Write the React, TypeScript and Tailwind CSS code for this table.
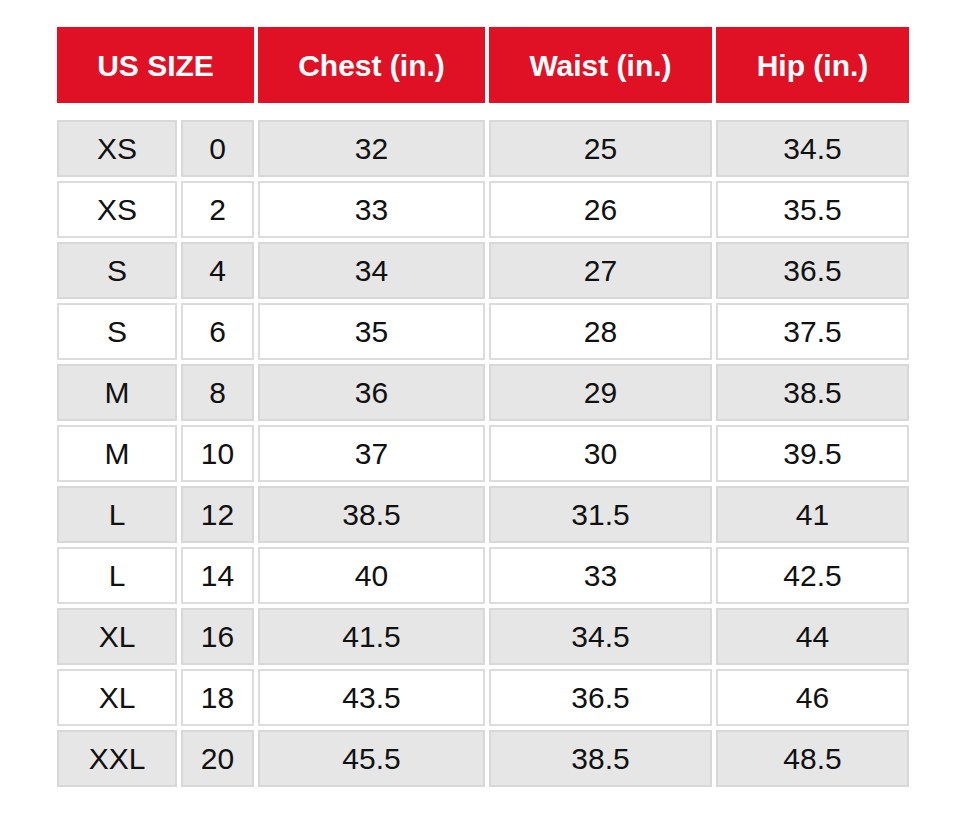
const headers = ["US SIZE", "Chest (in.)", "Waist (in.)", "Hip (in.)"];

const rows = [
  ["XS", "0", "32", "25", "34.5"],
  ["XS", "2", "33", "26", "35.5"],
  ["S", "4", "34", "27", "36.5"],
  ["S", "6", "35", "28", "37.5"],
  ["M", "8", "36", "29", "38.5"],
  ["M", "10", "37", "30", "39.5"],
  ["L", "12", "38.5", "31.5", "41"],
  ["L", "14", "40", "33", "42.5"],
  ["XL", "16", "41.5", "34.5", "44"],
  ["XL", "18", "43.5", "36.5", "46"],
  ["XXL", "20", "45.5", "38.5", "48.5"],
];

export default function App() {
  return (
    <div className="w-[972px] h-[824px] bg-white pt-[27px] pl-[57px] font-['Liberation_Sans',Arial,sans-serif]">
      {/* header */}
      <div className="grid grid-cols-[197px_227px_223px_193px] gap-[4px]">
        {headers.map((h) => (
          <div key={h} className="h-[76px] bg-[#e01125] text-white font-bold text-[30px] flex items-center justify-center">
            {h}
          </div>
        ))}
      </div>

      {/* body */}
      <div className="mt-[17px] grid grid-cols-[120px_73px_227px_223px_193px] gap-[4px]">
        {rows.map((r, i) =>
          r.map((c, j) => (
            <div
              key={`${i}-${j}`}
              className={`h-[57px] border-2 flex items-center justify-center text-[30px] text-[#111] ${
                i % 2 === 0 ? "bg-[#e6e6e6] border-[#d8d8d8]" : "bg-white border-[#dcdcdc]"
              }`}
            >
              {c}
            </div>
          ))
        )}
      </div>
    </div>
  );
}
